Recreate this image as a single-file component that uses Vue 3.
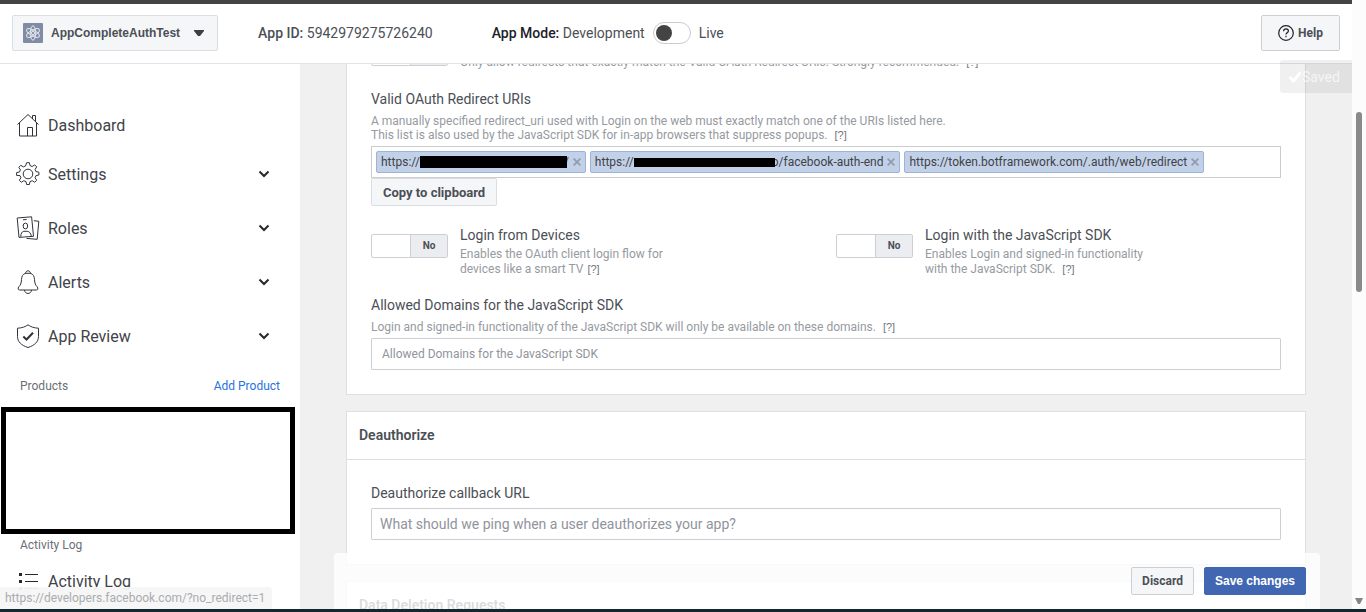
<script setup>
import { ref } from 'vue'

const live = ref(false)
const deviceLogin = ref(false)
const sdkLogin = ref(false)
const strictMode = ref(false)
const domains = ref('')
const callbackUrl = ref('')
const newUri = ref('')

const navItems = [
  { label: 'Dashboard', icon: 'home', expandable: false },
  { label: 'Settings', icon: 'gear', expandable: true },
  { label: 'Roles', icon: 'roles', expandable: true },
  { label: 'Alerts', icon: 'bell', expandable: true },
  { label: 'App Review', icon: 'shield', expandable: true },
]

const uris = [
  { start: 'https://', mask: 'wide', end: '/' },
  { start: 'https://', mask: 'thin', end: 'o/facebook-auth-end' },
  { start: 'https://token.botframework.com/.auth/web/redirect', mask: '', end: '' },
]
</script>

<template>
  <div class="window">
    <div class="viewport">
      <div class="page">
        <div class="topline"></div>
        <header class="header">
          <button class="btn app-picker" type="button">
            <svg class="app-logo" width="20" height="20" viewBox="0 0 20 20" aria-hidden="true">
              <rect width="20" height="20" rx="1" fill="#7f8ca4" />
              <g fill="none" stroke="#e1e6ee" stroke-width="1">
                <ellipse cx="10" cy="10" rx="2.7" ry="7.2" />
                <ellipse cx="10" cy="10" rx="2.7" ry="7.2" transform="rotate(60 10 10)" />
                <ellipse cx="10" cy="10" rx="2.7" ry="7.2" transform="rotate(120 10 10)" />
                <circle cx="10" cy="10" r="1.6" />
              </g>
            </svg>
            <span>AppCompleteAuthTest</span>
            <svg class="caret" width="12" height="8" viewBox="0 0 12 8" aria-hidden="true">
              <path d="M1 1h10v1L7 7H5L1 2z" fill="#3b4047" />
            </svg>
          </button>
          <div class="app-id"><b>App ID:</b> 5942979275726240</div>
          <div class="app-mode">
            <span><b>App Mode:</b> Development</span>
            <input id="live" v-model="live" class="mode-switch" type="checkbox" />
            <label for="live">Live</label>
          </div>
          <button class="btn help" type="button">
            <svg width="16" height="16" viewBox="0 0 16 16" fill="none" stroke="#1d2129" stroke-width="1.2" aria-hidden="true">
              <circle cx="8" cy="8" r="7.3" />
              <path d="M5.6 6.3C5.6 4.8 6.6 3.9 8 3.9s2.4.9 2.4 2.1c0 1.700-2.400 1.800-2.400 3.400" />
              <path d="M8 10.800v1.400" />
            </svg>
            <span>Help</span>
          </button>
        </header>

        <div class="body">
          <nav class="sidebar">
            <a v-for="item in navItems" :key="item.label" href="#" class="nav-item" :class="{ short: !item.expandable }">
              <svg class="nav-icon" width="24" height="24" viewBox="0 0 24 24" fill="none" stroke="#30343a" stroke-width="1" aria-hidden="true">
                <template v-if="item.icon === 'home'">
                  <path d="M1.500 11.500 12 1.500l10.500 10M3.500 9.500v13.500h17V9.500M11.500 23v-8.500h5V23M16.500 6V2.500h3v6.200" />
                </template>
                <template v-else-if="item.icon === 'gear'">
                  <path d="M10.600.7h2.800l.6 2.900 2.200.9 2.500-1.600 2 2-1.600 2.500.9 2.200 2.900.6v2.800l-2.900.6-.9 2.200 1.600 2.500-2 2-2.500-1.600-2.200.9-.6 2.900h-2.800l-.6-2.900-2.200-.9-2.500 1.600-2-2 1.600-2.500-.9-2.200L.6 13.400v-2.800l2.900-.6.900-2.200L2.800 5.300l2-2 2.500 1.600 2.200-.9z" stroke-linejoin="round" />
                  <circle cx="12" cy="12" r="4.800" />
                </template>
                <template v-else-if="item.icon === 'roles'">
                  <path d="M1.200 2 15.600.8 17.500 20.300 3 21.400zM17.800 4.700l5 .6-1.600 18-10.700-.9" stroke-linejoin="round" />
                  <path d="M7 3.800l3.600-.3" />
                  <ellipse cx="9.400" cy="10" rx="2.300" ry="2.900" />
                  <path d="M4.800 20.800c0-3.200 1-5.200 3-5.500h3.300c2.200.1 3.700 1.700 4.200 4.800" />
                </template>
                <template v-else-if="item.icon === 'bell'">
                  <path d="M9.500 3.800c0-4 5-4 5 0M9.500 3.300C6.700 4.200 5.600 6.500 5.500 9.500c-.2 4-1 5.500-2.600 7.200-1.500 1.800-.7 3.300.8 3.300h16.600c1.500 0 2.300-1.500.8-3.300-1.600-1.700-2.400-3.200-2.600-7.200-.1-3-1.200-5.300-4-6.200zM8.500 20c.3 4.600 6.700 4.600 7 0" />
                </template>
                <template v-else>
                  <path d="M12 .8c2.700 2.100 6.200 3.200 10.500 3.400v8.300c0 5.300-4 9-10.500 11-6.500-2-10.500-5.700-10.500-11V4.200C5.800 4 9.300 2.900 12 .8z" />
                  <path d="M7.300 12.500l3.200 3 6.500-6.800" stroke-width="2" />
                </template>
              </svg>
              <span>{{ item.label }}</span>
              <svg v-if="item.expandable" class="chevron" width="12" height="8" viewBox="0 0 12 8" aria-hidden="true">
                <path d="M1.500 1.500 6 6l4.500-4.500" fill="none" stroke="#25282d" stroke-width="2" />
              </svg>
            </a>
            <div class="section products">
              <span>Products</span>
              <a href="#">Add Product</a>
            </div>
            <div class="blank-box"></div>
            <div class="section log-section"><span>Activity Log</span></div>
            <a href="#" class="nav-item">
              <svg class="nav-icon" width="24" height="24" viewBox="0 0 24 24" aria-hidden="true">
                <path d="M3 4h3v3H3zM3 11h3v3H3zM3 18h3v3H3z" fill="#25282d" />
                <path d="M9 5.500h13M9 12.500h13M9 19.500h13" stroke="#25282d" stroke-width="1" />
              </svg>
              <span>Activity Log</span>
            </a>
          </nav>

          <main class="main">
            <section class="card oauth">
              <div class="option wide">
                <label class="yes-no">
                  <input v-model="strictMode" type="checkbox" aria-labelledby="strict-hint" />
                  <span class="yes"></span><span class="no"></span>
                </label>
                <p id="strict-hint" class="hint">Only allow redirects that exactly match the Valid OAuth Redirect URIs. Strongly recommended. <a class="q" href="#">[?]</a></p>
              </div>

              <label class="title" for="uris">Valid OAuth Redirect URIs</label>
              <p class="hint tight">
                A manually specified redirect_uri used with Login on the web must exactly match one of the URIs listed here.<br />
                This list is also used by the JavaScript SDK for in-app browsers that suppress popups. <a class="q" href="#">[?]</a>
              </p>
              <div class="tags">
                <span v-for="(uri, i) in uris" :key="i" class="tag">
                  <span class="tag-text">{{ uri.start }}<i v-if="uri.mask" class="mask" :class="uri.mask"></i>{{ uri.end }}</span>
                  <button type="button" aria-label="Remove">
                    <svg width="8" height="8" viewBox="0 0 8 8"><path d="M.6.6l6.800 6.800M7.400.6.6 7.400" stroke="#929cae" stroke-width="1.800" /></svg>
                  </button>
                </span>
                <input id="uris" v-model="newUri" type="text" />
              </div>
              <button class="btn copy" type="button">Copy to clipboard</button>

              <div class="pair">
                <div class="option">
                  <label class="yes-no">
                    <input id="devices" v-model="deviceLogin" type="checkbox" aria-label="Login from Devices" />
                    <span class="yes"></span><span class="no">No</span>
                  </label>
                  <div>
                    <label class="title" for="devices">Login from Devices</label>
                    <p class="hint">Enables the OAuth client login flow for<br />devices like a smart TV<a class="q" href="#">[?]</a></p>
                  </div>
                </div>
                <div class="option">
                  <label class="yes-no">
                    <input id="sdk" v-model="sdkLogin" type="checkbox" aria-label="Login with the JavaScript SDK" />
                    <span class="yes"></span><span class="no">No</span>
                  </label>
                  <div>
                    <label class="title" for="sdk">Login with the JavaScript SDK</label>
                    <p class="hint">Enables Login and signed-in functionality<br />with the JavaScript SDK. <a class="q" href="#">[?]</a></p>
                  </div>
                </div>
              </div>

              <label class="title" for="domains">Allowed Domains for the JavaScript SDK</label>
              <p class="hint domains-hint">Login and signed-in functionality of the JavaScript SDK will only be available on these domains. <a class="q" href="#">[?]</a></p>
              <input id="domains" v-model="domains" class="field small" type="text" placeholder="Allowed Domains for the JavaScript SDK" />
            </section>

            <section class="card">
              <h2>Deauthorize</h2>
              <div class="card-body">
                <label class="title" for="callback">Deauthorize callback URL</label>
                <input id="callback" v-model="callbackUrl" class="field" type="text" placeholder="What should we ping when a user deauthorizes your app?" />
              </div>
            </section>

            <section class="card">
              <h2>Data Deletion Requests</h2>
            </section>

            <div class="save-bar">
              <button class="btn discard" type="button">Discard</button>
              <button class="btn primary" type="button">Save changes</button>
            </div>
          </main>
        </div>

        <div class="toast">
          <svg width="14" height="12" viewBox="0 0 14 12" aria-hidden="true"><path d="M1.500 6l4 4L12.500 1.500" fill="none" stroke="#fff" stroke-width="3" /></svg>
          <span>Saved</span>
        </div>
        <div class="status">https://developers.facebook.com/?no_redirect=1</div>
      </div>

      <div class="scrollbar">
        <div class="thumb"></div>
        <svg width="8" height="7" viewBox="0 0 8 7" aria-hidden="true"><path d="M0 0h8L5 6H3z" fill="#858585" /></svg>
      </div>
    </div>
    <div class="taskbar"></div>
  </div>
</template>

<style>
body {
  background: #fff;
}
</style>

<style scoped>
* {
  box-sizing: border-box;
}
.window {
  display: flex;
  flex-direction: column;
  height: 100vh;
  overflow: hidden;
  font-family: Roboto, "Liberation Sans", sans-serif;
  font-size: 14px;
  color: #4b4f56;
}
.viewport {
  display: flex;
  flex: 1;
  min-height: 0;
}
.page {
  position: relative;
  display: flex;
  flex: 1;
  flex-direction: column;
  min-width: 0;
  overflow: hidden;
}
.topline {
  flex: none;
  height: 4px;
  background: #444;
}
.taskbar {
  flex: none;
  height: 3px;
  background: #14262f;
}
a {
  color: inherit;
  text-decoration: none;
}
button,
input {
  font-family: inherit;
  margin: 0;
}
b {
  font-weight: 500;
}
.btn {
  height: 28px;
  padding: 0 10px;
  border: 1px solid #ccd0d5;
  border-radius: 2px;
  background: #f5f6f7;
  color: #4b4f56;
  font-size: 12px;
  font-weight: 700;
  white-space: nowrap;
}
.header {
  position: relative;
  z-index: 1;
  display: flex;
  flex: none;
  align-items: center;
  height: 60px;
  padding: 0 12px 2px;
  border-bottom: 1px solid #e4e4e6;
  background: #fff;
  white-space: nowrap;
}
.header .btn {
  display: flex;
  align-items: center;
  height: 36px;
}
.app-picker,
.btn.primary {
  font-family: "Liberation Sans", sans-serif;
}
.app-picker {
  gap: 8px;
  border-color: #dadde1;
}
.caret {
  margin: 0 2px 0 5px;
}
.app-id {
  margin-left: 40px;
}
.app-mode {
  display: flex;
  align-items: center;
  gap: 8px;
  margin-left: 59px;
}
.app-mode b {
  color: #1d2129;
}
.mode-switch {
  display: flex;
  align-items: center;
  width: 38px;
  height: 22px;
  padding: 0 2px;
  border: 1px solid #ccc;
  border-radius: 11px;
  background: #fff;
  appearance: none;
}
.mode-switch::before {
  width: 16px;
  height: 16px;
  border-radius: 50%;
  background: #444;
  content: "";
}
.help {
  gap: 4px;
  margin-left: auto;
  padding: 0 16px;
}
.body {
  display: flex;
  flex: 1;
  min-height: 0;
}
.sidebar {
  flex: none;
  width: 300px;
  padding-top: 39px;
  overflow: hidden;
  background: #fff;
}
.nav-item {
  display: flex;
  align-items: center;
  gap: 8px;
  height: 54px;
  padding: 0 30px 0 16px;
  color: #3f434a;
  font-size: 16px;
}
.nav-item.short {
  height: 44px;
}
.chevron {
  margin-left: auto;
}
.section {
  display: flex;
  align-items: center;
  justify-content: space-between;
  height: 44px;
  padding: 0 20px;
  color: #6a7078;
  font-size: 12px;
}
.section.products {
  padding-top: 2px;
}
.section a {
  color: #2872dd;
}
.section.log-section {
  height: 22px;
}
.blank-box {
  height: 127px;
  margin: 0 5px 0 1px;
  border: 5px solid #000;
}
.log-section + .nav-item {
  height: 50px;
}
.main {
  position: relative;
  flex: 1;
  min-width: 0;
  padding: 0 46px;
  overflow: hidden;
  background: #f0f0f1;
}
.card {
  margin-bottom: 16px;
  border: 1px solid #dddfe2;
  background: #fff;
}
.oauth {
  margin-top: -47px;
  padding: 24px;
}
.title {
  display: block;
  color: #4b4f56;
  font-size: 14px;
  line-height: 18px;
}
.hint {
  margin: 0;
  color: #969aa1;
  font-size: 12px;
  line-height: 15px;
}
.hint.tight {
  margin: 6px 0 4px;
  line-height: 14px;
}
.q {
  margin-left: 4px;
  color: #70757d;
  font-family: "Liberation Sans", sans-serif;
  font-size: 11px;
}
.option {
  display: flex;
  gap: 12px;
}
.option.wide {
  margin-bottom: 20px;
}
.option.wide .hint {
  margin-top: 13px;
}
.pair {
  display: grid;
  grid-template-columns: 1fr 1fr;
  gap: 20px;
  margin: 20px 0 19px;
}
.pair .title {
  margin-bottom: 3px;
}
.yes-no {
  position: relative;
  display: flex;
  flex: none;
  width: 77px;
  height: 24px;
  border: 1px solid #ccd0d5;
  border-radius: 2px;
  background: #fff;
  color: #4b4f56;
  font-size: 10px;
  font-weight: 700;
  line-height: 22px;
  text-align: center;
}
.pair .yes-no {
  margin-top: 8px;
}
.yes-no input {
  position: absolute;
  inset: 0;
  width: 100%;
  height: 100%;
  opacity: 0;
}
.yes {
  width: 38px;
}
.no {
  flex: 1;
  border-left: 1px solid #ccd0d5;
  background: #ebedf0;
}
.tags {
  display: flex;
  gap: 4px;
  padding: 4px;
  border: 1px solid #ccc;
}
.tags input {
  flex: 1;
  min-width: 0;
  border: 0;
  outline: 0;
}
.tag {
  display: flex;
  align-items: center;
  height: 22px;
  padding: 0 4px;
  border: 1px solid #9cb4d8;
  border-radius: 2px;
  background: #c3d1e8;
  color: #3e4249;
  font-size: 12px;
  white-space: nowrap;
}
.tag-text {
  display: flex;
  align-items: center;
}
.tag button {
  display: flex;
  padding: 0;
  margin-left: 4px;
  border: 0;
  background: none;
}
.mask {
  z-index: 1;
  margin-right: -3px;
  background: #000;
}
.mask.wide {
  width: 147px;
  height: 12px;
}
.mask.thin {
  width: 141px;
  height: 9px;
}
.copy {
  display: block;
  padding: 0 11px;
  border-color: #dadde1;
  font-size: 13px;
}
.domains-hint {
  margin: 6px 0 3px;
}
.field {
  display: block;
  width: 100%;
  height: 32px;
  padding: 0 8px;
  border: 1px solid #ccd0d5;
  border-radius: 1px;
  background: #fff;
  color: #4b4f56;
  font-size: 14px;
}
.field.small {
  padding: 0 10px;
  font-size: 12px;
}
.field::placeholder {
  color: #90949c;
  opacity: 1;
}
h2 {
  margin: 0;
  padding: 14px 12px 15px;
  border-bottom: 1px solid #dddfe2;
  font-size: 14px;
  font-weight: 600;
  line-height: 18px;
}
.card-body {
  padding: 24px;
}
.card-body .title {
  margin-bottom: 6px;
}
.save-bar {
  position: absolute;
  right: 32px;
  bottom: 0;
  left: 34px;
  display: flex;
  justify-content: flex-end;
  gap: 10px;
  height: 56px;
  padding: 14px;
  border-radius: 4px 4px 0 0;
  background: rgba(255, 255, 255, 0.8);
}
.btn.primary {
  border-color: #4267b2;
  background: #4267b2;
  color: #fff;
}
.toast {
  position: absolute;
  top: 60px;
  right: 0;
  z-index: 2;
  display: flex;
  align-items: center;
  width: 72px;
  height: 33px;
  padding-left: 8px;
  border-radius: 3px 0 0 3px;
  background: rgba(0, 0, 0, 0.06);
  color: rgba(255, 255, 255, 0.7);
}
.status {
  position: absolute;
  bottom: 0;
  left: 0;
  height: 22px;
  padding: 0 7px 0 5px;
  border-radius: 0 4px 0 0;
  background: rgba(245, 245, 245, 0.95);
  color: #a9acb0;
  font-size: 12px;
  line-height: 22px;
}
.scrollbar {
  display: flex;
  flex: none;
  flex-direction: column;
  align-items: center;
  justify-content: space-between;
  width: 14px;
  padding: 112px 0 4px;
  background: #fcfcfc;
}
.thumb {
  width: 6px;
  height: 180px;
  border-radius: 3px;
  background: #8a8a8a;
}
</style>
